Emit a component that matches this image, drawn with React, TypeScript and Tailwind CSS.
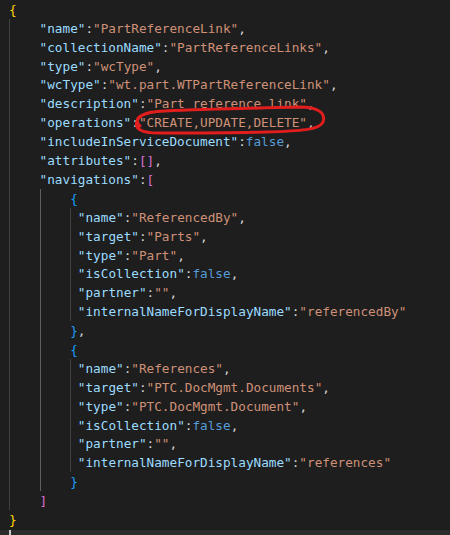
import React from "react";

type Tok = { t: string; c: string };

const K = (s: string): Tok => ({ t: `"${s}"`, c: "text-[#9cdcfe]" });
const S = (s: string): Tok => ({ t: `"${s}"`, c: "text-[#ce9178]" });
const P = (s: string): Tok => ({ t: s, c: "text-[#d4d4d4]" });
const B = (s: string): Tok => ({ t: s, c: "text-[#569cd6]" });
const Y = (s: string): Tok => ({ t: s, c: "text-[#ffd700]" });
const M = (s: string): Tok => ({ t: s, c: "text-[#da70d6]" });
const L = (s: string): Tok => ({ t: s, c: "text-[#179fff]" });

type Line = { g: number; extra?: boolean; toks: Tok[] };

const kv = (k: string, v: Tok, comma = true): Tok[] =>
  comma ? [K(k), P(":"), v, P(",")] : [K(k), P(":"), v];

const lines: Line[] = [
  { g: 0, toks: [Y("{")] },
  { g: 1, toks: kv("name", S("PartReferenceLink")) },
  { g: 1, toks: kv("collectionName", S("PartReferenceLinks")) },
  { g: 1, toks: kv("type", S("wcType")) },
  { g: 1, toks: kv("wcType", S("wt.part.WTPartReferenceLink")) },
  { g: 1, toks: kv("description", S("Part reference link")) },
  { g: 1, toks: kv("operations", S("CREATE,UPDATE,DELETE")) },
  { g: 1, toks: kv("includeInServiceDocument", B("false")) },
  { g: 1, toks: [K("attributes"), P(":"), M("[]"), P(",")] },
  { g: 1, toks: [K("navigations"), P(":"), M("[")] },
  { g: 2, toks: [L("{")] },
  { g: 2, extra: true, toks: kv("name", S("ReferencedBy")) },
  { g: 2, extra: true, toks: kv("target", S("Parts")) },
  { g: 2, extra: true, toks: kv("type", S("Part")) },
  { g: 2, extra: true, toks: kv("isCollection", B("false")) },
  { g: 2, extra: true, toks: kv("partner", S("")) },
  { g: 2, extra: true, toks: kv("internalNameForDisplayName", S("referencedBy"), false) },
  { g: 2, toks: [L("}"), P(",")] },
  { g: 2, toks: [L("{")] },
  { g: 2, extra: true, toks: kv("name", S("References")) },
  { g: 2, extra: true, toks: kv("target", S("PTC.DocMgmt.Documents")) },
  { g: 2, extra: true, toks: kv("type", S("PTC.DocMgmt.Document")) },
  { g: 2, extra: true, toks: kv("isCollection", B("false")) },
  { g: 2, extra: true, toks: kv("partner", S("")) },
  { g: 2, extra: true, toks: kv("internalNameForDisplayName", S("references"), false) },
  { g: 2, toks: [L("}")] },
  { g: 1, toks: [M("]")] },
  { g: 0, toks: [Y("}")] },
];

function CodeLine({ line }: { line: Line }) {
  return (
    <div className="flex h-[18.9px] items-center whitespace-pre">
      {line.g >= 1 && <span className="h-full w-[30.6px] shrink-0 border-l border-[#404040]" />}
      {line.g >= 2 && <span className="h-full w-[30.6px] shrink-0 border-l border-[#5f5f5f]" />}
      {line.extra && <span className="h-full w-[7.65px] shrink-0 border-l border-[#404040]" />}
      <span>
        {line.toks.map((t, i) => (
          <span key={i} className={t.c}>
            {t.t}
          </span>
        ))}
      </span>
    </div>
  );
}

export default function App() {
  return (
    <div
      className="relative flex h-[535px] w-[450px] flex-col overflow-hidden bg-[#1e1e1e] text-[12.7px]"
      style={{ fontFamily: '"DejaVu Sans Mono", "Liberation Mono", monospace' }}
    >
      <div className="flex flex-col pl-[9px]">
        {lines.map((l, i) => (
          <CodeLine key={i} line={l} />
        ))}
      </div>
      <div className="mt-auto flex h-[5px] bg-[#2b2b2b] pl-[9px]">
        <span className="h-full w-[2px] bg-[#c8c8c8]" />
      </div>
      <svg
        className="pointer-events-none absolute left-0 top-0"
        width="450"
        height="535"
        viewBox="0 0 450 535"
      >
        <path
          d="M 140 126 C 132 118, 142 112, 165 111 C 210 109, 260 108, 300 107 C 318 107, 326 113, 323 122 C 320 130, 300 131, 265 132 C 230 133, 190 133, 158 133 C 142 133, 134 129, 137 121 C 139 116, 146 113, 152 112"
          fill="none"
          stroke="#e11d1d"
          strokeWidth="3"
          strokeLinecap="round"
        />
      </svg>
    </div>
  );
}
